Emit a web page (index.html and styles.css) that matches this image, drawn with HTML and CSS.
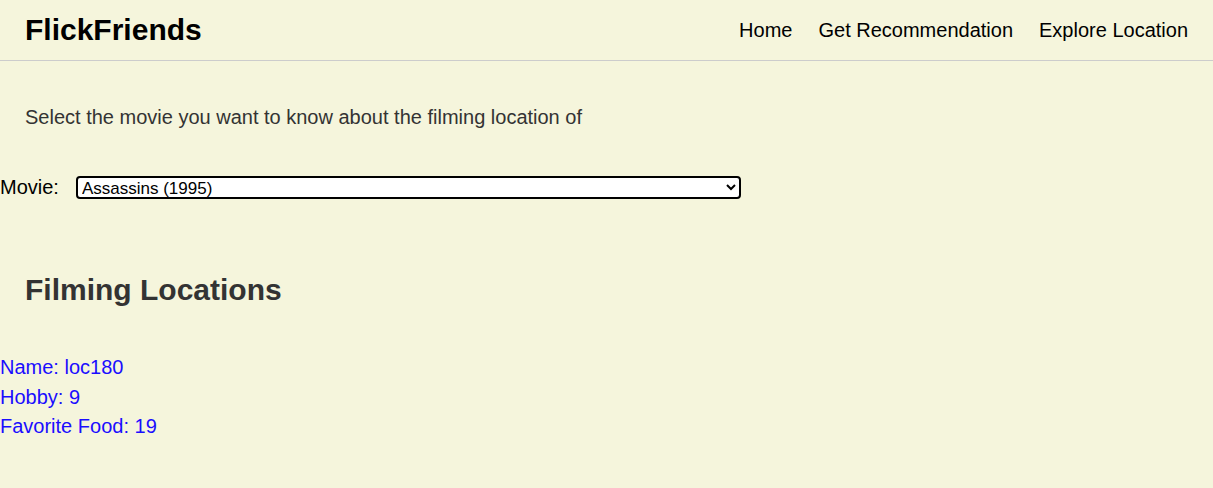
FILE: index.html
```html
<!DOCTYPE html>
<html>
<head>
<meta charset="utf-8">
<link rel="stylesheet" href="styles.css">
</head>
<body>
<header class="topbar">
  <div class="brand">FlickFriends</div>
  <nav class="nav">
    <a class="nav-link" href="#">Home</a>
    <a class="nav-link" href="#">Get Recommendation</a>
    <a class="nav-link" href="#">Explore Location</a>
  </nav>
</header>
<main class="content">
  <p class="intro">Select the movie you want to know about the filming location of</p>
  <div class="field">
    <label class="field-label" for="movie">Movie:</label>
    <select class="movie-select" id="movie">
      <option>Assassins (1995)</option>
    </select>
  </div>
  <h2 class="section-title">Filming Locations</h2>
  <ul class="locations">
    <li>Name: loc180</li>
    <li>Hobby: 9</li>
    <li>Favorite Food: 19</li>
  </ul>
</main>
</body>
</html>
```
FILE: styles.css
```css
html, body {
  margin: 0;
  padding: 0;
  background: #f5f5dc;
  font-family: "Liberation Sans", Arial, sans-serif;
}
.topbar {
  height: 60px;
  display: flex;
  align-items: center;
  justify-content: space-between;
  padding: 0 25px;
  border-bottom: 1px solid #cccccc;
}
.brand {
  font-size: 30px;
  font-weight: bold;
  color: #000;
}
.nav {
  display: flex;
  gap: 26px;
}
.nav-link {
  font-size: 20px;
  color: #000;
  text-decoration: none;
}
.content {
  padding: 0;
}
.intro {
  margin: 45px 0 0 0;
  padding-left: 25px;
  font-size: 20px;
  color: #333;
  line-height: 23px;
}
.field {
  display: flex;
  align-items: center;
  margin-top: 47px;
}
.field-label {
  font-size: 20px;
  color: #000;
  margin-right: 17px;
}
.movie-select {
  width: 665px;
  height: 23px;
  font-size: 17px;
  font-family: "Liberation Sans", Arial, sans-serif;
  border: 2px solid #000;
  border-radius: 4px;
  background: #fff;
  padding: 0;
}
.section-title {
  margin: 74px 0 0 0;
  padding-left: 25px;
  font-size: 30px;
  color: #333;
  line-height: 34px;
}
.locations {
  list-style: none;
  margin: 46px 0 0 0;
  padding: 0;
  font-size: 20px;
  color: #1a0dff;
}
.locations li {
  line-height: 29.5px;
}
```
